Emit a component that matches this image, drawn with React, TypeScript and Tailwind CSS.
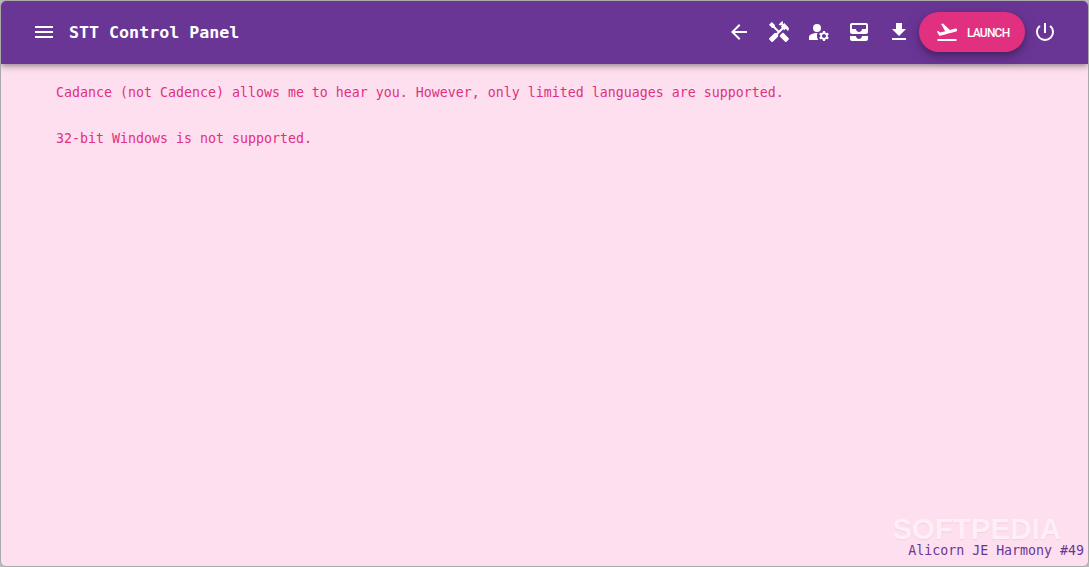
import {
  MdAllInbox,
  MdArrowBack,
  MdFlightTakeoff,
  MdGetApp,
  MdHandyman,
  MdManageAccounts,
  MdMenu,
  MdPowerSettingsNew,
} from "react-icons/md";

const mono = "font-['DejaVu_Sans_Mono','Liberation_Mono',monospace]";

export default function App() {
  const tools = [MdArrowBack, MdHandyman, MdManageAccounts, MdAllInbox, MdGetApp];

  return (
    <div className="h-[567px] w-[1089px] overflow-hidden bg-[#b9b9b9]">
      <div className="relative flex h-full flex-col overflow-hidden rounded-[6px] border-x border-t border-b border-[#a9a9a9] bg-[#fddfef]">
        {/* App bar */}
        <header className="flex h-[63px] shrink-0 items-center bg-[#6a3696] pb-[1px] pl-[31px] pr-[23px] text-white shadow-[0_2px_4px_-1px_rgba(0,0,0,0.2),0_4px_5px_0_rgba(0,0,0,0.14),0_1px_10px_0_rgba(0,0,0,0.12)]">
          <MdMenu className="h-6 w-6" />
          <h1 className={`ml-[13px] mt-[3px] flex-1 text-[16.65px] font-bold ${mono}`}>STT Control Panel</h1>
          {tools.map((Icon, idx) => (
            <button key={idx} className="flex h-10 w-10 items-center justify-center">
              <Icon className="h-6 w-6" />
            </button>
          ))}
          <button className="flex h-10 w-[106px] items-center rounded-full bg-[#e0307f] pl-[16px] shadow-[0_3px_5px_-1px_rgba(0,0,0,0.2),0_6px_10px_0_rgba(0,0,0,0.14),0_1px_18px_0_rgba(0,0,0,0.12)]">
            <MdFlightTakeoff className="h-6 w-6" />
            <span className="ml-[8px] mt-[1px] font-['Roboto',sans-serif] text-[12px] font-medium leading-none tracking-[-0.8px]">LAUNCH</span>
          </button>
          <button className="flex h-10 w-10 items-center justify-center">
            <MdPowerSettingsNew className="h-6 w-6" />
          </button>
        </header>

        {/* Messages */}
        <main className={`flex-1 pl-[55px] pt-[19px] text-[13.29px] leading-5 text-[#e0307f] ${mono}`}>
          <p className="mb-[26px]">Cadance (not Cadence) allows me to hear you. However, only limited languages are supported.</p>
          <p>32-bit Windows is not supported.</p>
        </main>

        {/* Watermark and version */}
        <span className="absolute bottom-[26px] right-[27px] font-['Liberation_Sans',sans-serif] text-[29.5px] font-bold leading-[22px] text-[#ffeef6] [text-shadow:0_1px_1px_rgba(225,190,210,0.45)]">
          SOFTPEDIA
        </span>
        <span className={`absolute bottom-[7px] right-[4px] text-[13.28px] leading-4 text-[#6a3696] ${mono}`}>
          Alicorn JE Harmony #49
        </span>
      </div>
    </div>
  );
}
